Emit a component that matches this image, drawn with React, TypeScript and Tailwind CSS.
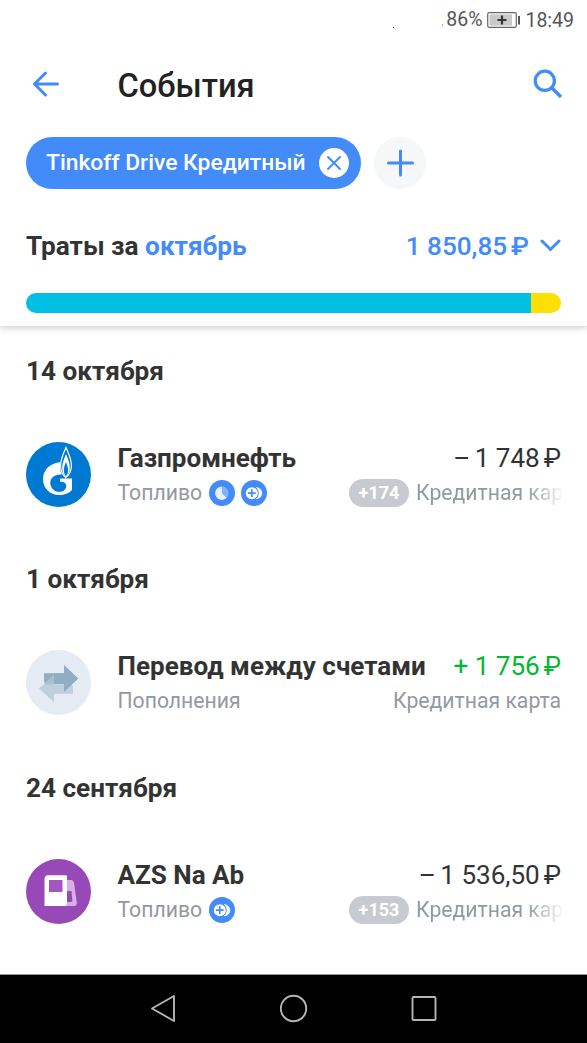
import type { ReactNode } from "react";

function BonusBadge() {
  return (
    <svg width="26" height="26" viewBox="0 0 26 26">
      <circle cx="13" cy="13" r="13" fill="#428bf9" />
      <circle cx="10.8" cy="13.2" r="6" fill="#fff" />
      <path d="M10.8 9.3v7.8M6.9 13.2h7.8" stroke="#428bf9" strokeWidth="1.7" />
      <path d="M15.2 7.4C22.8 8.2 22.8 18.2 15.2 19C19 16 19 10.4 15.2 7.4z" fill="#fff" stroke="#fff" strokeWidth="0.6" />
    </svg>
  );
}

function InstallmentBadge() {
  return (
    <svg width="26" height="26" viewBox="0 0 26 26">
      <circle cx="13" cy="13" r="13" fill="#428bf9" />
      <path d="M13 13V6.5a6.7 6.7 0 1 0 4.8 11.2z" fill="#e6effd" />
      <path d="M13 13V6.5a6.7 6.7 0 0 1 4.8 11.2z" fill="#82b2fb" />
    </svg>
  );
}

function GazpromAvatar() {
  return (
    <svg width="65" height="65" viewBox="0 0 65 65">
      <circle cx="32.5" cy="32.5" r="32.5" fill="#0079d3" />
      <path
        d="M34 20.3C24.2 21 17 28 17 37.2C17 46.3 24 53 33 53C38.5 53 43 51.5 46 48V36.5H34V39.8C38.2 39.4 40.2 41.5 40.2 44C40.2 47.5 37.3 49.8 33.3 49.8C28.5 49.8 24.3 46.2 24.3 41C24.3 35.8 28.8 32 35.8 32.6Q34 29 34 25Z"
        fill="#fff"
      />
      <path
        d="M40 5.5C37.5 11 34.6 16.5 34.6 23.5C34.6 29 36.5 33 39.8 35.5C43.2 33 45.4 29 45.4 23.5C45.4 16.5 42.5 11 40 5.5Z"
        fill="#0079d3"
        stroke="#fff"
        strokeWidth="1.2"
      />
      <path
        d="M40 12C38.5 16 36.2 20.5 36.2 26C36.2 30 37.6 33 39.8 35C42.1 33 43.8 30 43.8 26C43.8 20.5 41.5 16 40 12ZM40 20C41.3 23 42.1 25.5 42.1 28.5C42.1 31 41.2 32.8 39.9 34C38.6 32.8 37.9 31 37.9 28.5C37.9 25.5 38.7 23 40 20Z"
        fill="#fff"
        fillRule="evenodd"
      />
    </svg>
  );
}

function TransferAvatar() {
  return (
    <svg width="65" height="65" viewBox="0 0 65 65">
      <circle cx="32.5" cy="32.5" r="32.5" fill="#e4ebf4" />
      <path d="M18 23.2h20v-8L52 28.5L38 42v-8H22q-4 0-4-4z" fill="#90adc1" />
      <path d="M13 38.5L28 25v9.2h15q4 0 4 4v5.5H28v8.5z" fill="#bfcfdc" />
      <path d="M18 34L28 25v9.2h-8.6z" fill="#a9c0cf" />
      <path d="M38 23.2v-8L52 28.5L38 42v-8H28v-10.8z" fill="#90adc1" />
    </svg>
  );
}

function FuelAvatar() {
  return (
    <svg width="65" height="65" viewBox="0 0 65 65">
      <circle cx="32.5" cy="32.5" r="32.5" fill="#9849b8" />
      <path
        d="M40.5 21H45Q47.5 21 48 24L50.8 43.5Q51 47 48 47H37V43H44.5Q46.8 43 46.3 40.5L45.5 32H41Z"
        fill="#d4b1e0"
      />
      <path
        d="M22 16.3H40Q41 16.3 41 17.3V43.5Q41 47 37.5 47H18.5V20Q18.5 16.3 22 16.3Z"
        fill="#fff"
      />
      <path d="M23 21h13.5v12H23z" fill="#a356c0" />
    </svg>
  );
}

type OperationProps = {
  date: string;
  avatar: ReactNode;
  title: string;
  category: string;
  badges?: ReactNode;
  amount: ReactNode;
  amountClass: string;
  cashback?: string;
};

function Operation({ date, avatar, title, category, badges, amount, amountClass, cashback }: OperationProps) {
  return (
    <section className="h-[208.5px] px-[26px]">
      <h2 className="flex h-[89px] items-center text-[26.15px] font-bold leading-[30px] text-[#333]">{date}</h2>
      <div className="flex pt-[26.5px]">
        <div className="shrink-0">{avatar}</div>
        <div className="ml-[26.5px] flex min-w-0 grow flex-col">
          <div className="flex h-8 items-center justify-between whitespace-nowrap text-[26.05px] leading-8">
            <span className="font-bold text-[#333]">{title}</span>
            <span className={amountClass}>
              {amount}
              <span className="ml-[4px]">₽</span>
            </span>
          </div>
          <div className="mt-[5px] flex h-[28px] items-center justify-between whitespace-nowrap text-[21.2px] leading-[28px] text-[#9299a2]">
            <div className="flex items-center gap-[6.5px]">
              <span>{category}</span>
              {badges}
            </div>
            {cashback ? (
              <div className="flex w-[212px] items-center gap-[7px]">
                <span className="flex h-[28px] w-[60px] shrink-0 items-center justify-center rounded-full bg-[#c7cad0] text-[18px] font-bold text-white">
                  {cashback}
                </span>
                <span className="min-w-0 overflow-hidden [mask-image:linear-gradient(to_right,black_110px,transparent_150px)]">
                  Кредитная карта
                </span>
              </div>
            ) : (
              <span>Кредитная карта</span>
            )}
          </div>
        </div>
      </div>
    </section>
  );
}

export default function App() {
  return (
    <div className="flex h-[1043px] w-[587px] flex-col overflow-hidden bg-white font-['Roboto',sans-serif]">
      <header className="z-10 h-[326px] shrink-0 bg-white shadow-[0_1px_7px_rgba(0,0,0,0.25)]">
        <div className="flex h-10 items-center justify-end pr-[13px] text-[19.5px] text-[#555]">
          <span className="mr-[48px] mt-[14px] h-px w-px bg-[#555]" />
          <span className="mr-[3px] mt-[10px] h-[2px] w-px bg-[#aaa]" />
          <span className="mr-[5px]">86%</span>
          <svg className="mr-[4px]" width="34" height="16" viewBox="0 0 34 16">
            <rect x="0.7" y="0.7" width="28.6" height="14.6" rx="1.5" fill="#fff" stroke="#666" strokeWidth="1.2" />
            <rect x="2.5" y="2.3" width="22.5" height="11.4" fill="#c9c9c9" />
            <path d="M15 3.5v9M10.5 8h9" stroke="#333" strokeWidth="2.2" />
            <path d="M32 4v8.5" stroke="#555" strokeWidth="2" />
          </svg>
          <span className="pt-px">18:49</span>
        </div>
        <div className="flex h-[97px] items-center pl-[32px] pr-[24px] pb-[5px]">
          <svg className="mb-[4px]" width="28" height="28" viewBox="0 0 28 28" fill="none" stroke="#428bf9" strokeWidth="3" strokeLinecap="round" strokeLinejoin="round">
            <path d="M25.5 14H2.5M13.5 3L2.5 14l11 11" />
          </svg>
          <h1 className="ml-[57.5px] grow text-[32.6px] font-medium leading-[40px] text-[#222]">События</h1>
          <svg className="mb-[5px]" width="30" height="30" viewBox="0 0 30 30" fill="none" stroke="#428bf9" strokeWidth="3.2">
            <circle cx="11.8" cy="11.8" r="9.6" />
            <path d="M18.5 18.5l9.5 9.5" strokeWidth="3.4" />
          </svg>
        </div>
        <div className="flex items-center gap-[13px] pl-[26px]">
          <div className="flex h-[52px] w-[335px] items-center justify-between rounded-full bg-[#428bf9] pl-5 pr-[12px] text-[22.85px] font-medium text-white">
            <span className="whitespace-nowrap pt-px">Tinkoff Drive Кредитный</span>
            <svg width="30" height="30" viewBox="0 0 30 30">
              <circle cx="15" cy="15" r="15" fill="#fff" />
              <path d="M9 9l12 12M21 9L9 21" stroke="#428bf9" strokeWidth="1.9" strokeLinecap="round" />
            </svg>
          </div>
          <div className="flex size-[52px] items-center justify-center rounded-full bg-[#f6f7f8]">
            <svg width="28" height="28" viewBox="0 0 28 28" stroke="#428bf9" strokeWidth="3" strokeLinecap="round">
              <path d="M14.5 2v24M2.5 14h24" />
            </svg>
          </div>
        </div>
        <div className="flex h-[104px] items-center justify-between px-[26px] pt-[10px] text-[26.2px] leading-[30px]">
          <span className="font-bold text-[#333]">
            Траты за <span className="text-[#428bf9]">октябрь</span>
          </span>
          <span className="flex items-center text-[26.1px] font-medium text-[#428bf9]">
            1 850,85<span className="ml-[4px]">₽</span>
            <svg className="mb-[2px] ml-[11px]" width="21" height="13" viewBox="0 0 21 13" fill="none" stroke="#428bf9" strokeWidth="3" strokeLinecap="round">
              <path d="M2 2l8.5 8.5L19 2" />
            </svg>
          </span>
        </div>
        <div className="mx-[26px] flex h-5 overflow-hidden rounded-full">
          <div className="grow bg-[#00bfe3]" />
          <div className="w-[30px] bg-[#ffdf00]" />
        </div>
      </header>
      <main className="h-[648px] shrink-0 overflow-hidden">
        <Operation
          date="14 октября"
          avatar={<GazpromAvatar />}
          title="Газпромнефть"
          category="Топливо"
          badges={
            <>
              <InstallmentBadge />
              <BonusBadge />
            </>
          }
          amount={<><span className="mr-[-2px]">– </span>1 748</>}
          amountClass="text-[#333]"
          cashback="+174"
        />
        <Operation
          date="1 октября"
          avatar={<TransferAvatar />}
          title="Перевод между счетами"
          category="Пополнения"
          amount="+ 1 756"
          amountClass="text-[#00b92d]"
        />
        <Operation
          date="24 сентября"
          avatar={<FuelAvatar />}
          title="AZS Na Ab"
          category="Топливо"
          badges={<BonusBadge />}
          amount={<><span className="mr-[-2px]">– </span>1 536,50</>}
          amountClass="text-[#333]"
          cashback="+153"
        />
      </main>
      <nav className="flex h-[69px] shrink-0 items-center justify-center gap-[102px] border-t border-[#999] bg-black">
        <svg width="28" height="30" viewBox="0 0 28 30" fill="none" stroke="#b5b5b5" strokeWidth="1.9" strokeLinejoin="round">
          <path d="M24 2v25L2 14.5z" />
        </svg>
        <svg width="28" height="30" viewBox="0 0 28 30" fill="none" stroke="#b5b5b5" strokeWidth="1.9">
          <circle cx="13.5" cy="14.5" r="12.7" />
        </svg>
        <svg width="28" height="30" viewBox="0 0 28 30" fill="none" stroke="#b5b5b5" strokeWidth="1.9">
          <rect x="2.5" y="3" width="23" height="23" rx="1" />
        </svg>
      </nav>
    </div>
  );
}
